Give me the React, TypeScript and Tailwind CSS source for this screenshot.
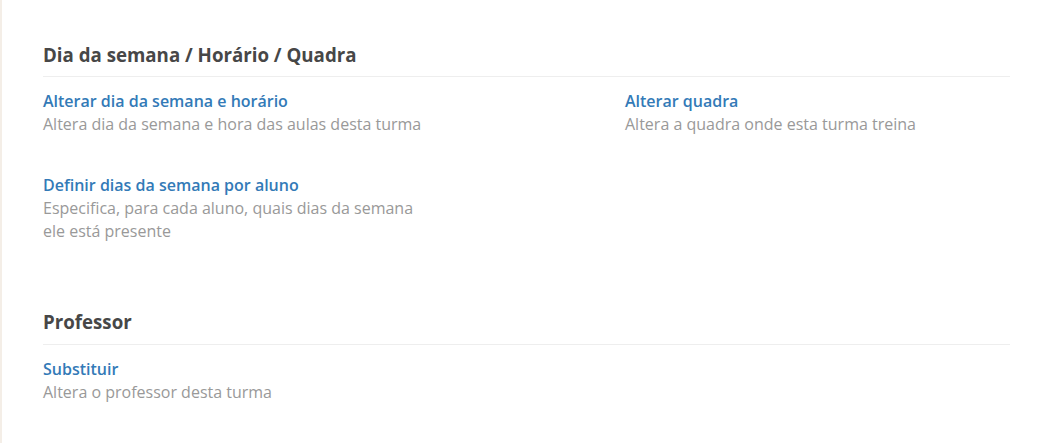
import React from "react";

const font = { fontFamily: '"Open Sans", "Noto Sans", sans-serif' };

function Item({ title, desc }: { title: string; desc: string }) {
  return (
    <div className="max-w-[392px]">
      <a className="block text-[16px] leading-[23px] font-semibold text-[#337ab7] cursor-pointer">{title}</a>
      <p className="text-[16px] leading-[23px] text-[#999999]">{desc}</p>
    </div>
  );
}

export default function App() {
  return (
    <div style={font} className="min-h-[443px] bg-white border-l-2 border-[#f4eee7] pl-[41px] pr-[41px] pt-[42px]">
      <section>
        <h2 className="text-[18.7px] leading-[25px] font-bold text-[#474747] pb-[9px] border-b border-[#eeeeee]">
          Dia da semana / Horário / Quadra
        </h2>
        <div className="grid grid-cols-[582px_1fr] gap-y-[38px] mt-[13px]">
          <Item title="Alterar dia da semana e horário" desc="Altera dia da semana e hora das aulas desta turma" />
          <Item title="Alterar quadra" desc="Altera a quadra onde esta turma treina" />
          <Item title="Definir dias da semana por aluno" desc="Especifica, para cada aluno, quais dias da semana ele está presente" />
        </div>
      </section>
      <section className="mt-[66px]">
        <h2 className="text-[18.7px] leading-[25px] font-bold text-[#474747] pb-[10px] border-b border-[#eeeeee]">
          Professor
        </h2>
        <div className="mt-[13px]">
          <Item title="Substituir" desc="Altera o professor desta turma" />
        </div>
      </section>
    </div>
  );
}
